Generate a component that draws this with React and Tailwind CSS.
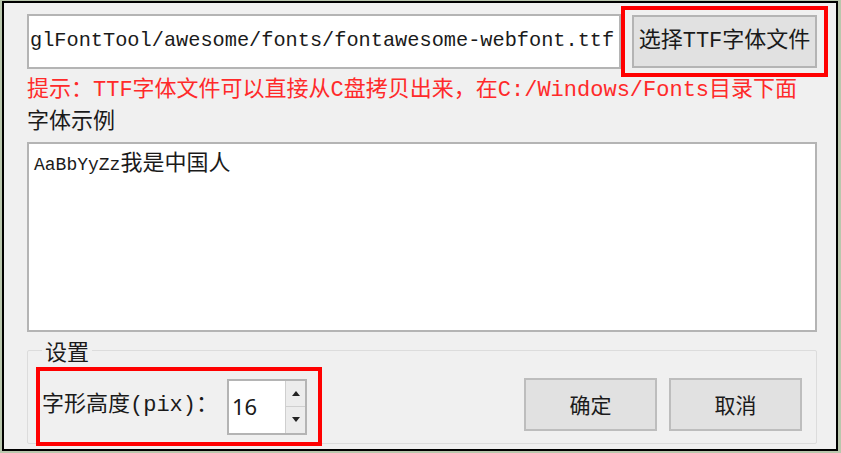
import React from "react";

export default function App() {
  return (
    <div className="w-[841px] h-[453px] bg-[#b9c7ad] pt-[1px] pl-[2px] pr-[3px] pb-[2px] font-['Liberation_Mono','Noto_Sans_CJK_SC',monospace] text-[#1a1a1a]">
      <div className="h-full border-2 border-black bg-[#f0f0f0] pl-[23px] pr-[19px] pt-[3px] flex flex-col">
        {/* Row 1 */}
        <div className="flex items-center h-[71px]">
          <div className="w-[594px] h-[55px] bg-white border-2 border-[#b4b4b4] flex items-center overflow-hidden whitespace-nowrap pl-[1px] text-[20.3px]">
            glFontTool/awesome/fonts/fontawesome-webfont.ttf
          </div>
          <div className="w-[207px] h-[71px] border-[4px] border-[#ff0000] flex items-center justify-center shrink-0 -mr-[11px]">
            <div className="w-[185px] h-[53px] bg-[#e1e1e1] border-2 border-[#b4b4b4] flex items-center justify-center text-[22px] whitespace-nowrap">
              选择TTF字体文件
            </div>
          </div>
        </div>
        {/* Hint */}
        <div className="mt-[1px] text-[22px] leading-[26px] text-[#ff2a2a] whitespace-nowrap">
          提示：TTF字体文件可以直接从C盘拷贝出来，在C:/Windows/Fonts目录下面
        </div>
        <div className="mt-[1px] text-[22px] leading-[26px] font-['Noto_Sans_CJK_SC',sans-serif]">
          字体示例
        </div>
        {/* Textarea */}
        <div className="mt-[11px] h-[190px] bg-white border-2 border-[#b4b4b4] pl-[5px] pt-[2px] leading-[28px] whitespace-nowrap">
          <span className="text-[18px] font-['Liberation_Mono',monospace]">AaBbYyZz</span>
          <span className="text-[22px] font-['Noto_Sans_CJK_SC',sans-serif]">我是中国人</span>
        </div>
        {/* Group box */}
        <fieldset className="mt-[6px] h-[106px] border border-[#dcdcdc] rounded-[2px] pl-[8px] pr-[14px]">
          <legend className="ml-[6px] px-[3px] text-[22px] leading-[24px] font-['Noto_Sans_CJK_SC',sans-serif]">
            设置
          </legend>
          <div className="flex items-start justify-between mt-[5px]">
            <div className="w-[286px] h-[79px] border-[4px] border-[#ff0000] flex items-center pl-[2px]">
              <div className="w-[185px] text-[22px] whitespace-nowrap -mt-[2px]">字形高度(pix)：</div>
              <div className="w-[80px] h-[56px] bg-white border-2 border-[#b4b4b4] flex">
                <div className="flex-1 flex items-center pl-[3px] text-[22px] font-['Noto_Sans',sans-serif]">16</div>
                <div className="w-[20px] flex flex-col bg-[#ececec] border-l border-[#cfcfcf]">
                  <div className="flex-1 flex items-center justify-center border-b border-[#cfcfcf]">
                    <svg width="8" height="5" viewBox="0 0 8 5"><polygon points="4,0 8,5 0,5" fill="#222" /></svg>
                  </div>
                  <div className="flex-1 flex items-center justify-center">
                    <svg width="8" height="5" viewBox="0 0 8 5"><polygon points="0,0 8,0 4,5" fill="#222" /></svg>
                  </div>
                </div>
              </div>
            </div>
            <div className="flex gap-[12px] mt-[11px]">
              <div className="w-[133px] h-[53px] bg-[#e1e1e1] border-2 border-[#bdbdbd] flex items-center justify-center text-[21px] font-['Noto_Sans_CJK_SC',sans-serif]">
                确定
              </div>
              <div className="w-[133px] h-[53px] bg-[#e1e1e1] border-2 border-[#bdbdbd] flex items-center justify-center text-[21px] font-['Noto_Sans_CJK_SC',sans-serif]">
                取消
              </div>
            </div>
          </div>
        </fieldset>
      </div>
    </div>
  );
}
